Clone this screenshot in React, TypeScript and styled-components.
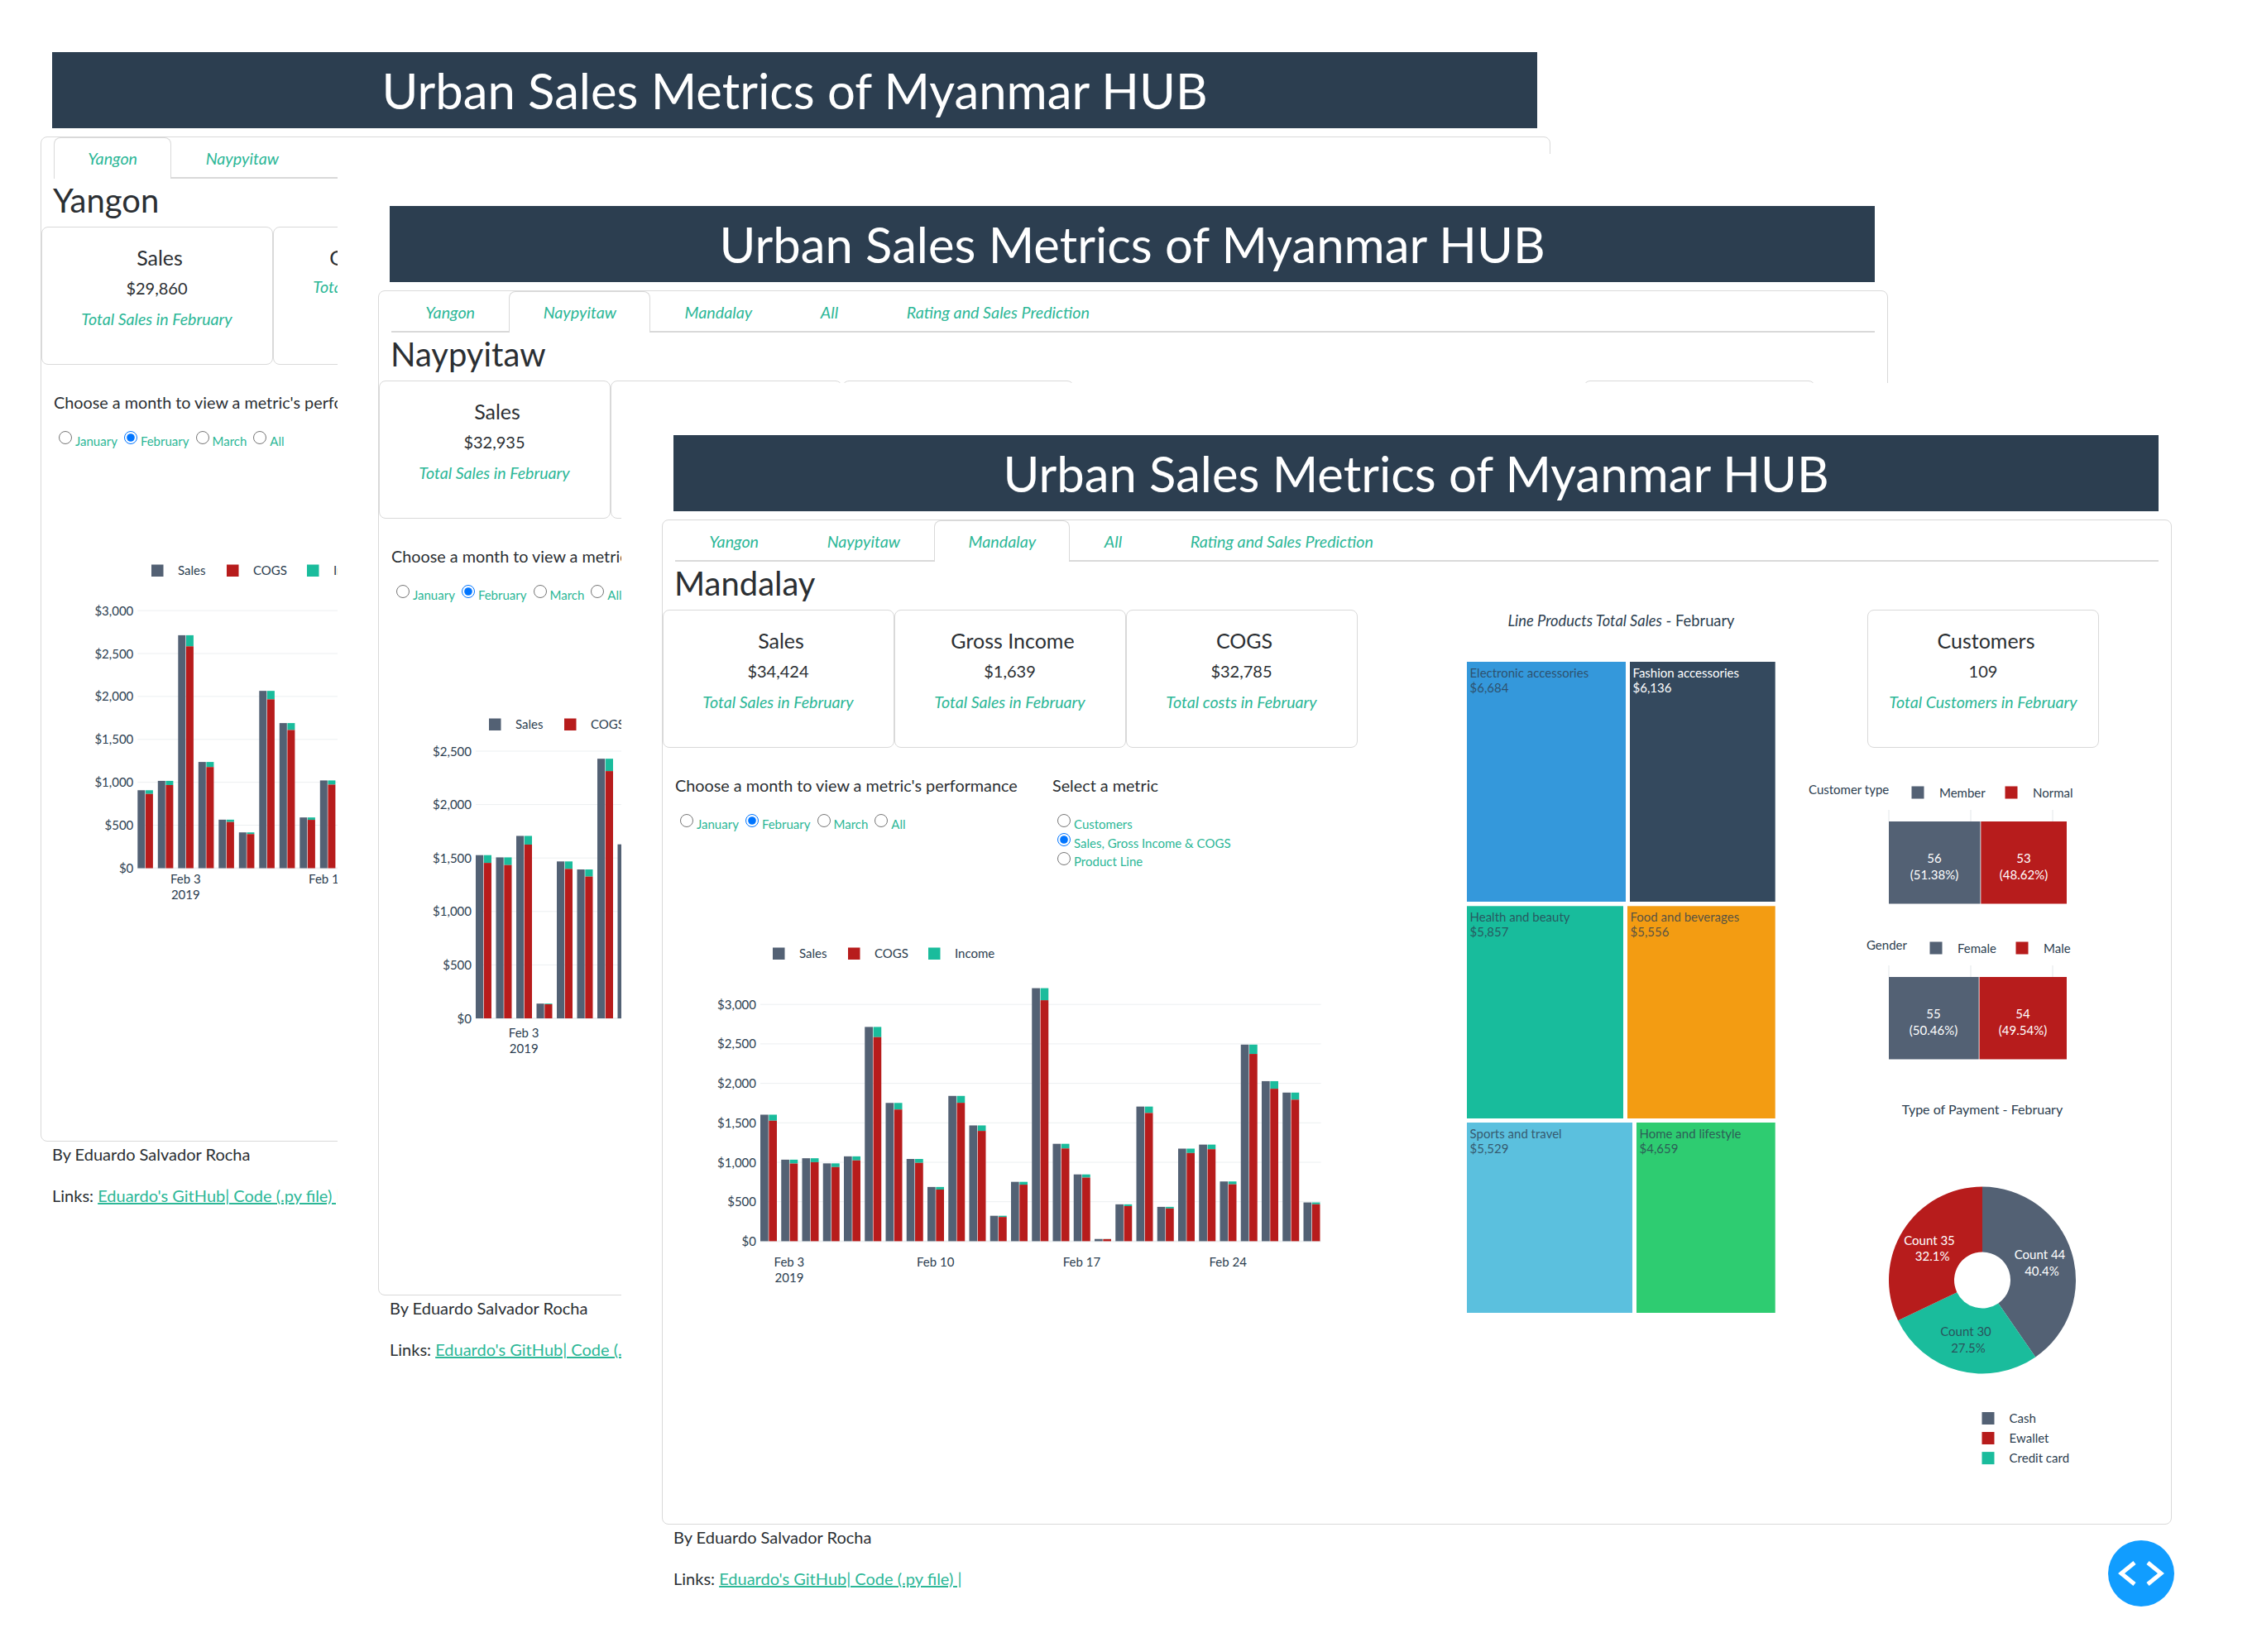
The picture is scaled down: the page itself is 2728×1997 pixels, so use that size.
import React from 'react';
import styled, { createGlobalStyle } from 'styled-components';

const NAVY = '#2c3e50';
const TEAL = '#1abc9c';
const SOFT_TEAL = '#2cb797';
const SLATE = '#536174';
const RED = '#b71c1c';
const LINE = '#d9d9d9';
const TEXT = '#2b2f33';
const GRID = '#eceff1';

const GlobalStyle = createGlobalStyle`
  html, body {
    margin: 0;
    background: #fff;
    overflow: hidden;
  }
  body {
    font-family: 'Lato', 'Liberation Sans', sans-serif;
    color: ${TEXT};
  }
`;

const Desktop = styled.div`
  height: 1997px;
  position: relative;
  width: 2728px;
`;

// each window is one overlapping screenshot of the same dashboard
const Window = styled.section<{ $left: number; $top: number }>`
  background: #fff;
  bottom: 0;
  left: ${props => props.$left}px;
  overflow: hidden;
  padding: 63px 0 0 63px;
  position: absolute;
  top: ${props => props.$top}px;
  width: 1977px;
  box-sizing: border-box;
`;

const Banner = styled.h1`
  background: ${NAVY};
  color: #fff;
  font-size: 59.8px;
  font-weight: 400;
  height: 92px;
  line-height: 92px;
  margin: 0;
  text-align: center;
  width: 1795px;
`;

const Frame = styled.div`
  border: 1.5px solid ${LINE};
  border-radius: 8px;
  box-sizing: border-box;
  height: 1215px;
  margin: 10px 0 0 -14px;
  width: 1825px;
`;

const TabBar = styled.nav`
  border-bottom: 2px solid ${LINE};
  box-sizing: border-box;
  display: flex;
  height: 50px;
  margin: 0 15px;
`;

const Tab = styled.a<{ $active?: boolean }>`
  border: 1.5px solid ${props => (props.$active ? LINE : 'transparent')};
  border-bottom: 0;
  border-radius: 8px 8px 0 0;
  color: ${SOFT_TEAL};
  font-size: 19.7px;
  font-style: italic;
  height: 50px;
  line-height: 49px;
  padding: 0 40.3px;
  white-space: nowrap;
  background: ${props => (props.$active ? '#fff' : 'transparent')};
  box-sizing: border-box;
`;

const CityHeading = styled.h2`
  font-size: 40px;
  font-weight: 400;
  height: 58px;
  line-height: 52px;
  margin: 0;
  padding-left: 14px;
`;

const Body = styled.div`
  display: grid;
  grid-template-columns: 840px 530px 1fr;
`;

const CardRow = styled.div`
  display: flex;
  margin-left: -0.5px;
`;

const Card = styled.div`
  border: 1.5px solid ${LINE};
  border-radius: 8px;
  box-sizing: border-box;
  height: 166.5px;
  padding-top: 18px;
  text-align: center;
  width: 280px;
`;

const CardTitle = styled.h5`
  font-size: 25px;
  font-weight: 400;
  line-height: 36px;
  margin: 0;
  padding-left: 7px;
`;

const CardValue = styled.div`
  font-size: 20px;
  line-height: 38.5px;
`;

const CardNote = styled.div`
  color: ${SOFT_TEAL};
  font-size: 19.6px;
  font-style: italic;
  line-height: 36px;
  white-space: nowrap;
`;

const Controls = styled.div`
  display: flex;
  height: 199px;
  margin-top: 30px;
  padding-left: 15px;
`;

const ControlGroup = styled.div<{ $width: number }>`
  width: ${props => props.$width}px;
  white-space: nowrap;
`;

const ControlLabel = styled.div`
  font-size: 19.8px;
  line-height: 30px;
  margin-bottom: 21px;
`;

const RadioList = styled.div<{ $inline?: boolean }>`
  display: flex;
  flex-direction: ${props => (props.$inline ? 'row' : 'column')};
  gap: ${props => (props.$inline ? '8px' : '0')};
  padding-left: 6px;
`;

const RadioOption = styled.label`
  align-items: center;
  color: ${SOFT_TEAL};
  display: flex;
  font-size: 15px;
  gap: 4px;
  height: 22.7px;
`;

const Radio = styled.input.attrs({ type: 'radio' })`
  height: 16px;
  margin: 0 0 7px;
  width: 16px;
`;

const ChartBox = styled.svg`
  display: block;
  font-family: 'Lato', 'Liberation Sans', sans-serif;
  margin-left: 15px;
`;

const ChartLabel = styled.text<{ $size?: number }>`
  fill: ${NAVY};
  font-size: ${props => props.$size || 15}px;
`;

const MiddleColumn = styled.div`
  padding-left: 132px;
`;

const TreemapTitle = styled.div`
  color: ${NAVY};
  font-size: 18.3px;
  line-height: 26px;
  margin-bottom: 36.5px;
  text-align: center;
  white-space: nowrap;
  width: 373px;
`;

const TreemapBox = styled.svg`
  display: block;
  font-family: 'Lato', 'Liberation Sans', sans-serif;
`;

const RightColumn = styled.div`
  min-width: 0;
`;

const CustomerCard = styled(Card)`
  margin-left: 86px;
`;

const SplitBarBox = styled.svg<{ $gap: number }>`
  display: block;
  font-family: 'Lato', 'Liberation Sans', sans-serif;
  margin-top: ${props => props.$gap}px;
`;

const PaymentTitle = styled.div`
  color: ${NAVY};
  font-size: 16px;
  line-height: 24px;
  margin-top: 28px;
  text-align: center;
  width: 450px;
`;

const PieBox = styled.svg`
  display: block;
  font-family: 'Lato', 'Liberation Sans', sans-serif;
`;

const Footer = styled.footer`
  font-size: 20px;
  line-height: 30px;
`;

const FooterLine = styled.p`
  margin: 0 0 20px;
  white-space: nowrap;
`;

const FooterLink = styled.a`
  color: ${SOFT_TEAL};
  text-decoration: underline;
`;

const ToggleButton = styled.button`
  align-items: center;
  background: #119dff;
  border: 0;
  border-radius: 50%;
  display: flex;
  height: 80px;
  justify-content: center;
  left: 2548px;
  padding: 0;
  position: absolute;
  top: 1862px;
  width: 80px;
`;

type BarChartProps = {
  gridEnd: number;
  pitch: number;
  barWidth: number;
  sales: number[];
  startX: number;
  xTicks: { index: number; label: string; year?: string }[];
  yTicks: number[];
  zeroY: number;
  pxPerUnit: number;
};

const money = (value: number) => `$${value.toLocaleString('en-US')}`;

const LEGEND = [
  { color: SLATE, label: 'Sales', x: 125 },
  { color: RED, label: 'COGS', x: 216 },
  { color: TEAL, label: 'Income', x: 313 },
];

// coordinates below are relative to the box at (65, 670) in the window
const SalesChart = ({
  barWidth,
  gridEnd,
  pitch,
  pxPerUnit,
  sales,
  startX,
  xTicks,
  yTicks,
  zeroY,
}: BarChartProps) => {
  const x0 = startX - 65;
  const y0 = zeroY - 670;

  return (
    <ChartBox width={825} height={430}>
      {LEGEND.map(item => (
        <g key={item.label}>
          <rect x={item.x - 7} y={12.5} width={14.5} height={14.5} fill={item.color} />
          <ChartLabel x={item.x + 25} y={25}>{item.label}</ChartLabel>
        </g>
      ))}
      {yTicks.map(tick => {
        const y = y0 - tick * pxPerUnit;
        return (
          <g key={tick}>
            <line x1={x0} x2={gridEnd - 65} y1={y} y2={y} stroke={GRID} strokeWidth={tick === 0 ? 2 : 1} />
            <ChartLabel x={x0 - 5} y={y + 5.5} textAnchor="end">{money(tick)}</ChartLabel>
          </g>
        );
      })}
      {sales.map((value, index) => {
        const x = x0 + index * pitch;
        const top = y0 - value * pxPerUnit;
        const cogsTop = y0 - value * 0.9524 * pxPerUnit;
        return (
          <g key={index}>
            <rect x={x} y={top} width={barWidth} height={y0 - top} fill={SLATE} />
            <rect x={x + barWidth + 0.6} y={top} width={barWidth} height={cogsTop - top} fill={TEAL} />
            <rect x={x + barWidth + 0.6} y={cogsTop} width={barWidth} height={y0 - cogsTop} fill={RED} />
          </g>
        );
      })}
      {xTicks.map(tick => {
        const x = x0 + tick.index * pitch + barWidth;
        return (
          <g key={tick.label}>
            <ChartLabel x={x} y={398} textAnchor="middle">{tick.label}</ChartLabel>
            {tick.year && <ChartLabel x={x} y={416.5} textAnchor="middle">{tick.year}</ChartLabel>}
          </g>
        );
      })}
    </ChartBox>
  );
};

const TREEMAP = [
  { x: 0, y: 0, w: 192, h: 290, color: '#3498db', name: 'Electronic accessories', value: '$6,684' },
  { x: 197, y: 0, w: 175.7, h: 290, color: '#34495e', name: 'Fashion accessories', value: '$6,136', light: true },
  { x: 0, y: 295.3, w: 189, h: 256.7, color: '#18bc9c', name: 'Health and beauty', value: '$5,857' },
  { x: 194, y: 295.3, w: 178.7, h: 256.7, color: '#f39c12', name: 'Food and beverages', value: '$5,556' },
  { x: 0, y: 557, w: 200, h: 230, color: '#5bc0de', name: 'Sports and travel', value: '$5,529' },
  { x: 205, y: 557, w: 167.7, h: 230, color: '#2ecc71', name: 'Home and lifestyle', value: '$4,659' },
];

const Treemap = () => (
  <TreemapBox width={373} height={787}>
    {TREEMAP.map(cell => (
      <g key={cell.name}>
        <rect x={cell.x} y={cell.y} width={cell.w} height={cell.h} fill={cell.color} />
        <text x={cell.x + 3.5} y={cell.y + 19} fontSize={15} fill={cell.light ? '#fff' : '#2c3e50'} fillOpacity={cell.light ? 1 : 0.8}>
          {cell.name}
        </text>
        <text x={cell.x + 3.5} y={cell.y + 37} fontSize={15} fill={cell.light ? '#fff' : '#2c3e50'} fillOpacity={cell.light ? 1 : 0.8}>
          {cell.value}
        </text>
      </g>
    ))}
  </TreemapBox>
);

type SplitBarProps = {
  gap: number;
  title: string;
  titleX: number;
  legend: { label: string; swatch: number }[];
  split: number;
  parts: { count: number; share: string; center: number }[];
};

const SplitBar = ({ gap, legend, parts, split, title, titleX }: SplitBarProps) => (
  <SplitBarBox $gap={gap} width={450} height={170}>
    <ChartLabel x={titleX} y={17}>{title}</ChartLabel>
    {legend.map((item, index) => (
      <g key={item.label}>
        <rect x={item.swatch - 7.5} y={7.5} width={15} height={15} fill={index ? RED : SLATE} />
        <ChartLabel x={item.swatch + 26} y={20.5}>{item.label}</ChartLabel>
      </g>
    ))}
    {[112, 211, 310].map(x => (
      <line key={x} x1={x} x2={x} y1={36} y2={50} stroke={GRID} strokeWidth={1.5} />
    ))}
    <rect x={112} y={50} width={split - 112} height={99.5} fill={SLATE} />
    <rect x={split + 0.8} y={50} width={327 - split - 0.8} height={99.5} fill={RED} />
    {parts.map(part => (
      <g key={part.center} fill="#fff" fontSize={15} textAnchor="middle">
        <text x={part.center} y={100}>{part.count}</text>
        <text x={part.center} y={120}>({part.share})</text>
      </g>
    ))}
  </SplitBarBox>
);

const PIE = [
  { count: 44, color: SLATE, label: 'Cash' },
  { count: 30, color: TEAL, label: 'Credit card' },
  { count: 35, color: RED, label: 'Ewallet' },
];

const slicePath = (from: number, to: number) => {
  const cx = 225;
  const cy = 194.5;
  const outer = 113;
  const inner = 34;
  const point = (angle: number, radius: number) =>
    `${cx + radius * Math.sin(angle)} ${cy - radius * Math.cos(angle)}`;
  const large = to - from > Math.PI ? 1 : 0;
  return `M${point(from, outer)}A${outer} ${outer} 0 ${large} 1 ${point(to, outer)}`
    + `L${point(to, inner)}A${inner} ${inner} 0 ${large} 0 ${point(from, inner)}Z`;
};

const PaymentPie = () => {
  const total = PIE.reduce((sum, slice) => sum + slice.count, 0);
  let angle = 0;

  return (
    <PieBox width={450} height={425}>
      {PIE.map(slice => {
        const start = angle;
        angle += (slice.count / total) * Math.PI * 2;
        return <path key={slice.label} d={slicePath(start, angle)} fill={slice.color} />;
      })}
      <g fill="#fff" fontSize={15} textAnchor="middle">
        <text x={294.5} y={169}>Count 44</text>
        <text x={297} y={188.5}>40.4%</text>
        <text x={161} y={151.5}>Count 35</text>
        <text x={164.6} y={170.5}>32.1%</text>
      </g>
      <g fill={NAVY} fillOpacity={0.85} fontSize={15} textAnchor="middle">
        <text x={205} y={262}>Count 30</text>
        <text x={208} y={282}>27.5%</text>
      </g>
      {[
        { label: 'Cash', color: SLATE, y: 361.5 },
        { label: 'Ewallet', color: RED, y: 385.5 },
        { label: 'Credit card', color: TEAL, y: 409.6 },
      ].map(item => (
        <g key={item.label}>
          <rect x={224.5} y={item.y - 7.5} width={15} height={15} fill={item.color} />
          <ChartLabel x={257.6} y={item.y + 5}>{item.label}</ChartLabel>
        </g>
      ))}
    </PieBox>
  );
};

type CardData = { title?: string; value?: string; note?: string };

const StatCard = ({ note, title, value }: CardData) => (
  <>
    {title && <CardTitle>{title}</CardTitle>}
    {value && <CardValue>{value}</CardValue>}
    {note && <CardNote>{note}</CardNote>}
  </>
);

const TABS = ['Yangon', 'Naypyitaw', 'Mandalay', 'All', 'Rating and Sales Prediction'];
const MONTHS = ['January', 'February', 'March', 'All'];
const METRICS = ['Customers', 'Sales, Gross Income & COGS', 'Product Line'];

type DashboardProps = {
  city: string;
  cards: CardData[];
  chart: BarChartProps;
  customers?: CardData;
  full?: boolean;
  left: number;
  tabs?: string[];
  top: number;
};

const Dashboard = ({ cards, chart, city, customers = {}, full, left, tabs = TABS, top }: DashboardProps) => (
  <Window $left={left} $top={top}>
    <Banner>Urban Sales Metrics of Myanmar HUB</Banner>
    <Frame>
      <TabBar>
        {tabs.map(tab => <Tab key={tab} $active={tab === city}>{tab}</Tab>)}
      </TabBar>
      <CityHeading>{city}</CityHeading>
      <Body>
        <div>
          <CardRow>
            {cards.map((card, index) => (
              <Card key={index}><StatCard {...card} /></Card>
            ))}
          </CardRow>
          <Controls>
            <ControlGroup $width={456}>
              <ControlLabel>Choose a month to view a metric's performance</ControlLabel>
              <RadioList $inline>
                {MONTHS.map(month => (
                  <RadioOption key={month}>
                    <Radio name={`${city}-month`} defaultChecked={month === 'February'} />
                    {month}
                  </RadioOption>
                ))}
              </RadioList>
            </ControlGroup>
            {full && (
              <ControlGroup $width={360}>
                <ControlLabel>Select a metric</ControlLabel>
                <RadioList>
                  {METRICS.map(metric => (
                    <RadioOption key={metric}>
                      <Radio name={`${city}-metric`} defaultChecked={metric === METRICS[1]} />
                      {metric}
                    </RadioOption>
                  ))}
                </RadioList>
              </ControlGroup>
            )}
          </Controls>
          <SalesChart {...chart} />
        </div>
        <MiddleColumn>
          {full && (
            <>
              <TreemapTitle><em>Line Products Total Sales</em> - February</TreemapTitle>
              <Treemap />
            </>
          )}
        </MiddleColumn>
        <RightColumn>
          <CustomerCard><StatCard {...customers} /></CustomerCard>
          {full && (
            <>
              <SplitBar
                gap={39}
                title="Customer type"
                titleX={15}
                split={222.5}
                legend={[{ label: 'Member', swatch: 147 }, { label: 'Normal', swatch: 260 }]}
                parts={[
                  { count: 56, share: '51.38%', center: 167 },
                  { count: 53, share: '48.62%', center: 275 },
                ]}
              />
              <SplitBar
                gap={18}
                title="Gender"
                titleX={85}
                split={220.7}
                legend={[{ label: 'Female', swatch: 169 }, { label: 'Male', swatch: 273 }]}
                parts={[
                  { count: 55, share: '50.46%', center: 166 },
                  { count: 54, share: '49.54%', center: 274 },
                ]}
              />
              <PaymentTitle>Type of Payment - February</PaymentTitle>
              <PaymentPie />
            </>
          )}
        </RightColumn>
      </Body>
    </Frame>
    <Footer>
      <FooterLine>By Eduardo Salvador Rocha</FooterLine>
      <FooterLine>
        Links: <FooterLink>Eduardo's GitHub| Code (.py file) |</FooterLink>
      </FooterLine>
    </Footer>
  </Window>
);

const YANGON_SALES = [908, 1017, 2713, 1237, 565, 417, 2065, 1690, 591, 1022];
const NAYPYITAW_SALES = [1527, 1506, 1707, 138, 1468, 1393, 2429, 1628];
const MANDALAY_SALES = [
  1603, 1033, 1051, 986, 1075, 2715, 1752, 1042, 687, 1841, 1467, 322, 752, 3206,
  1234, 846, 28, 467, 1706, 435, 1173, 1224, 757, 2491, 2028, 1883, 491,
];

export default function App() {
  return (
    <Desktop>
      <GlobalStyle />
      <Dashboard
        city="Yangon"
        left={0}
        top={0}
        tabs={TABS.slice(0, 2)}
        cards={[
          { title: 'Sales', value: '$29,860', note: 'Total Sales in February' },
          { title: 'Gross Income', note: 'Total Sales in February' },
        ]}
        chart={{
          barWidth: 9,
          gridEnd: 845,
          pitch: 24.5,
          pxPerUnit: 0.1038,
          sales: YANGON_SALES,
          startX: 166.3,
          xTicks: [{ index: 2, label: 'Feb 3', year: '2019' }, { index: 9, label: 'Feb 10' }],
          yTicks: [0, 500, 1000, 1500, 2000, 2500, 3000],
          zeroY: 1049.5,
        }}
      />
      <Dashboard
        city="Naypyitaw"
        left={408}
        top={186}
        cards={[
          { title: 'Sales', value: '$32,935', note: 'Total Sales in February' },
          {},
          {},
        ]}
        chart={{
          barWidth: 9.2,
          gridEnd: 845,
          pitch: 24.5,
          pxPerUnit: 0.1292,
          sales: NAYPYITAW_SALES,
          startX: 167,
          xTicks: [{ index: 2, label: 'Feb 3', year: '2019' }],
          yTicks: [0, 500, 1000, 1500, 2000, 2500],
          zeroY: 1045,
        }}
      />
      <Dashboard
        full
        city="Mandalay"
        left={751}
        top={463}
        cards={[
          { title: 'Sales', value: '$34,424', note: 'Total Sales in February' },
          { title: 'Gross Income', value: '$1,639', note: 'Total Sales in February' },
          { title: 'COGS', value: '$32,785', note: 'Total costs in February' },
        ]}
        customers={{ title: 'Customers', value: '109', note: 'Total Customers in February' }}
        chart={{
          barWidth: 9.7,
          gridEnd: 845.6,
          pitch: 25.25,
          pxPerUnit: 0.0954,
          sales: MANDALAY_SALES,
          startX: 168,
          xTicks: [
            { index: 1, label: 'Feb 3', year: '2019' },
            { index: 8, label: 'Feb 10' },
            { index: 15, label: 'Feb 17' },
            { index: 22, label: 'Feb 24' },
          ],
          yTicks: [0, 500, 1000, 1500, 2000, 2500, 3000],
          zeroY: 1037.4,
        }}
      />
      <ToggleButton aria-label="Toggle debug tools">
        <svg width="60" height="40" viewBox="0 0 60 40" fill="none" stroke="#fff" strokeWidth="5">
          <path d="M22 7 L6 20 L22 33" />
          <path d="M38 7 L54 20 L38 33" />
        </svg>
      </ToggleButton>
    </Desktop>
  );
}
